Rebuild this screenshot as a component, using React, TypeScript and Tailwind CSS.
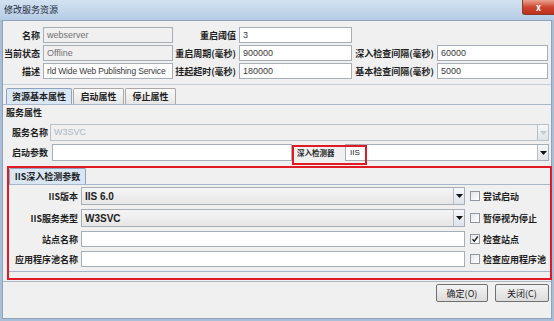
import React from 'react';

const label = "font-bold text-[#1e1e1e] text-[9px] leading-none whitespace-nowrap";
const latin = "font-['Liberation_Sans',sans-serif]";

function TextBox({ value = '', grey = false, className = '' }: { value?: string; grey?: boolean; className?: string }) {
  return (
    <div
      className={`h-full flex items-center pl-[3px] border border-[#a6aeb8] text-[9px] leading-none overflow-hidden whitespace-nowrap ${latin} ${
        grey ? 'bg-[#f0f0f0] text-[#707070]' : 'bg-white text-[#3a3a3a]'
      } ${className}`}
    >
      {value}
    </div>
  );
}

function Arrow({ disabled = false }: { disabled?: boolean }) {
  return (
    <div className="w-[11px] h-full shrink-0 flex items-center justify-center border-l border-[#b7bec8] bg-gradient-to-b from-[#f6f8fa] to-[#dde3ea]">
      <svg width="7" height="4" viewBox="0 0 7 4">
        <path d="M0 0h7L3.5 4z" fill={disabled ? '#c2c9d1' : '#111'} />
      </svg>
    </div>
  );
}

function Check({ checked = false, text }: { checked?: boolean; text: string }) {
  return (
    <div className="flex items-center gap-[3px]">
      <div className="w-[10px] h-[10px] border border-[#8e969f] bg-gradient-to-br from-[#e2e6ea] to-white flex items-center justify-center">
        {checked && (
          <svg width="8" height="8" viewBox="0 0 8 8">
            <path d="M1.5 4.2l1.8 2L6.8 1.5" stroke="#1a1a1a" strokeWidth="1.3" fill="none" />
          </svg>
        )}
      </div>
      <span className={label}>{text}</span>
    </div>
  );
}

function Tab({ text, active = false, className = '' }: { text: string; active?: boolean; className?: string }) {
  return (
    <div
      className={`h-[16px] flex items-center justify-center border border-b-0 rounded-t-[2px] ${label} ${
        active ? 'bg-[#d9e7f5] border-[#8ea4bd]' : 'bg-gradient-to-b from-[#fafafa] to-[#e6e6e6] border-[#a9a9a9]'
      } ${className}`}
    >
      {text}
    </div>
  );
}

function Lbl({ text, className = '' }: { text: string; className?: string }) {
  return <div className={`shrink-0 flex justify-end ${label} ${className}`}>{text}</div>;
}

export default function App() {
  return (
    <div className="w-[554px] h-[321px] bg-[#a9bfd8] flex flex-col overflow-hidden font-['Noto_Sans_CJK_SC',sans-serif]">
      {/* title bar */}
      <div className="h-[20px] shrink-0 flex items-start justify-between pl-[4px] bg-gradient-to-b from-[#d3e2f1] to-[#b6cce5]">
        <span className="text-[9px] leading-none mt-[5px] text-[#1f2d3d]">修改服务资源</span>
        <div className="w-[32px] h-[15px] rounded-bl-[3px] border-l border-b border-[#8a3a30] bg-gradient-to-b from-[#e9a192] via-[#cd4631] to-[#bd2f1b] flex items-center justify-center text-white text-[9px] font-bold leading-none">
          x
        </div>
      </div>

      {/* body */}
      <div className="flex-1 mx-[2px] mb-[2px] bg-[#f0f0f0] border border-[#8ea3bb] flex flex-col">
        {/* top info */}
        <div className="pt-[6px] pb-[5px] flex flex-col gap-[2px] border-b border-[#c3d0de]">
          <div className="h-[16px] flex items-center">
            <Lbl text="名称" className="w-[37px]" />
            <TextBox value="webserver" grey className="w-[130px] ml-[3px]" />
            <Lbl text="重启阈值" className="w-[63px]" />
            <TextBox value="3" className="w-[113px] ml-[3px]" />
          </div>
          <div className="h-[16px] flex items-center">
            <Lbl text="当前状态" className="w-[37px]" />
            <TextBox value="Offline" grey className="w-[130px] ml-[3px]" />
            <Lbl text="重启周期(毫秒)" className="w-[63px]" />
            <TextBox value="900000" className="w-[113px] ml-[3px]" />
            <Lbl text="深入检查间隔(毫秒)" className="w-[82px]" />
            <TextBox value="60000" className="w-[111px] ml-[3px]" />
          </div>
          <div className="h-[16px] flex items-center">
            <Lbl text="描述" className="w-[37px]" />
            <TextBox value="rld Wide Web Publishing Service" className="w-[130px] ml-[3px] !text-[8.5px] tracking-[-0.15px]" />
            <Lbl text="挂起超时(毫秒)" className="w-[63px]" />
            <TextBox value="180000" className="w-[113px] ml-[3px]" />
            <Lbl text="基本检查间隔(毫秒)" className="w-[82px]" />
            <TextBox value="5000" className="w-[111px] ml-[3px]" />
          </div>
        </div>

        {/* tabs */}
        <div className="mt-[3px] pl-[3px] flex items-end gap-[1px]">
          <Tab text="资源基本属性" active className="w-[66px]" />
          <Tab text="启动属性" className="w-[51px]" />
          <Tab text="停止属性" className="w-[51px]" />
        </div>

        <div className="border-t border-b border-[#a7b8cb] flex flex-col">
          <div className={`pl-[3px] pt-[3px] h-[16px] ${label}`}>服务属性</div>

          <div className="mt-[3px] pl-[9px] pr-[2px] flex flex-col gap-[3px]">
            <div className="h-[17px] flex items-center">
              <div className={`w-[38px] ${label}`}>服务名称</div>
              <div className="flex-1 h-full flex border border-[#b9c0c8] bg-[#f0f0f0]">
                <div className={`flex-1 flex items-center pl-[3px] text-[9px] text-[#a9b7c6] ${latin}`}>W3SVC</div>
                <Arrow disabled />
              </div>
            </div>
            <div className="h-[17px] flex items-center">
              <div className={`w-[40px] ${label}`}>启动参数</div>
              <TextBox className="w-[240px]" />
              <div className="relative flex-1 h-full flex items-center">
                <div className="w-[53px] pl-[5px] text-[7.5px] font-bold leading-none text-[#2a2a2a] whitespace-nowrap">深入检测器</div>
                <div className="flex-1 h-full flex border border-[#a6aeb8] bg-white">
                  <div className={`flex-1 flex items-center pl-[4px] text-[8px] text-[#1a1a1a] ${latin}`}>IIS</div>
                  <Arrow />
                </div>
                <div className="absolute left-0 top-[1px] w-[75px] h-[20px] border-2 border-[#e01b23]" />
              </div>
            </div>
          </div>

          {/* IIS box */}
          <div className="mt-[5px] ml-[4px] mr-[-1px] mb-[1px] h-[114px] border-2 border-[#e01b23] flex flex-col">
            <div className="flex">
              <Tab text="IIS深入检测参数" active className="w-[77px] h-[15px]" />
            </div>
            <div className="border-t border-b border-[#a7b8cb] pt-[2px] pb-[4px] flex flex-col gap-[4px]">
              <div className="h-[18px] flex items-center">
                <Lbl text="IIS版本" className="w-[69px]" />
                <div className="ml-[3px] w-[384px] h-full flex border border-[#a6aeb8] bg-gradient-to-b from-[#f5f5f5] to-[#e6e6e6]">
                  <div className={`flex-1 flex items-center pl-[3px] text-[10px] font-bold text-[#222] ${latin}`}>IIS 6.0</div>
                  <Arrow />
                </div>
                <div className="ml-[5px]">
                  <Check text="尝试启动" />
                </div>
              </div>
              <div className="h-[18px] flex items-center">
                <Lbl text="IIS服务类型" className="w-[69px]" />
                <div className="ml-[3px] w-[384px] h-full flex border border-[#a6aeb8] bg-gradient-to-b from-[#f5f5f5] to-[#e6e6e6]">
                  <div className={`flex-1 flex items-center pl-[3px] text-[10px] font-bold text-[#222] ${latin}`}>W3SVC</div>
                  <Arrow />
                </div>
                <div className="ml-[5px]">
                  <Check text="暂停视为停止" />
                </div>
              </div>
              <div className="h-[16px] flex items-center">
                <Lbl text="站点名称" className="w-[69px]" />
                <TextBox className="ml-[3px] w-[384px]" />
                <div className="ml-[5px]">
                  <Check checked text="检查站点" />
                </div>
              </div>
              <div className="h-[16px] flex items-center">
                <Lbl text="应用程序池名称" className="w-[69px]" />
                <TextBox className="ml-[3px] w-[384px]" />
                <div className="ml-[5px]">
                  <Check text="检查应用程序池" />
                </div>
              </div>
            </div>
          </div>
        </div>

        {/* buttons */}
        <div className="flex-1 flex justify-end items-start gap-[7px] pt-[2px] pr-[2px]">
          <button className="w-[52px] h-[18px] rounded-[2px] border border-[#707070] bg-gradient-to-b from-[#f4f4f4] to-[#dcdcdc] text-[9px] leading-none text-[#1a1a1a]">
            确定(O)
          </button>
          <button className="w-[54px] h-[18px] rounded-[2px] border border-[#707070] bg-gradient-to-b from-[#f4f4f4] to-[#dcdcdc] text-[9px] leading-none text-[#1a1a1a]">
            关闭(C)
          </button>
        </div>
      </div>
    </div>
  );
}
